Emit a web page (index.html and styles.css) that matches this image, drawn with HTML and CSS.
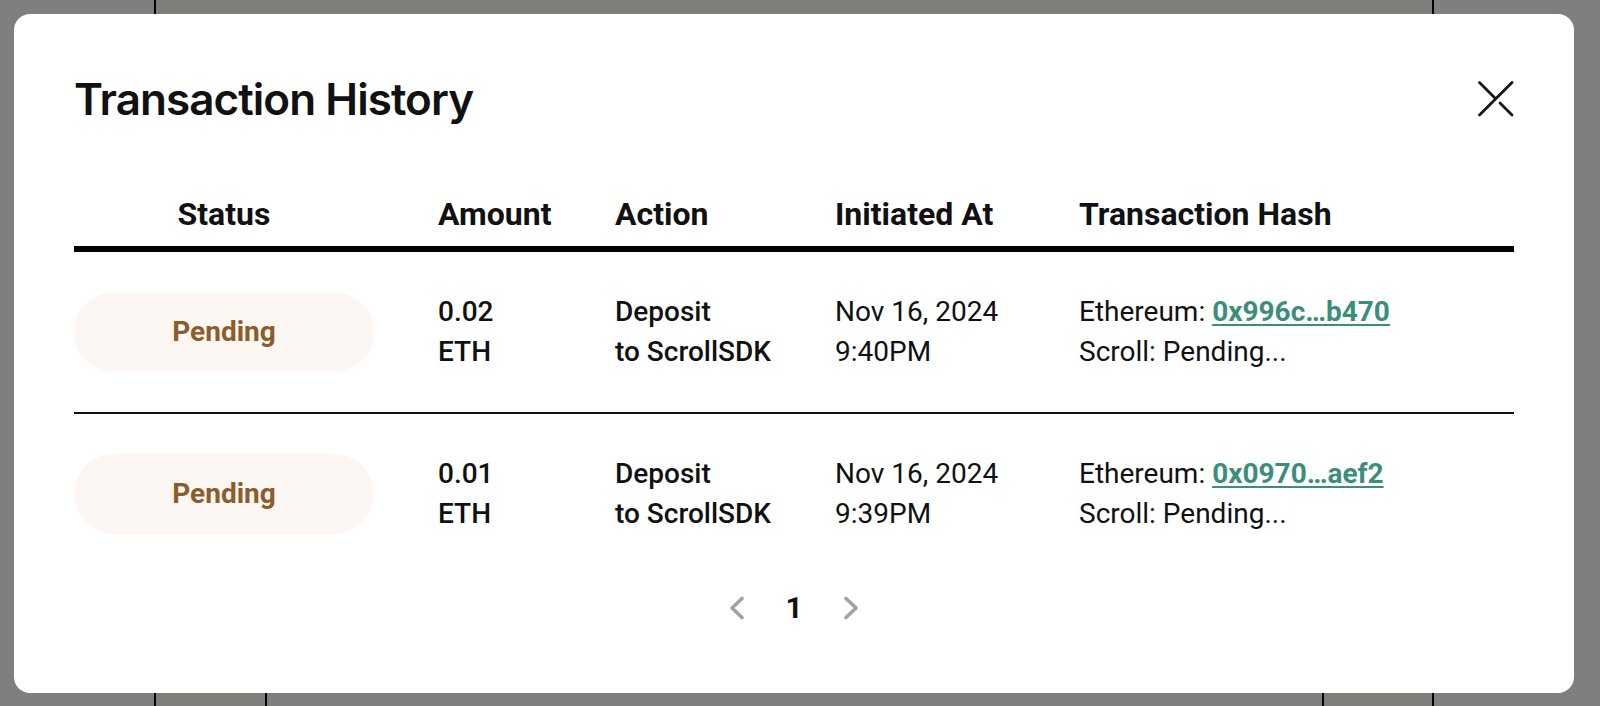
FILE: index.html
```html
<!DOCTYPE html>
<html lang="en">
<head>
<meta charset="utf-8">
<title>Transaction History</title>
<link rel="stylesheet" href="styles.css">
</head>
<body>
<div class="page">
  <div class="page-frame">
    <div class="page-top"></div>
    <div class="page-card"></div>
  </div>
</div>

<div class="overlay">
  <div class="modal" role="dialog" aria-labelledby="modal-title">
    <div class="modal-head">
      <h2 class="modal-title" id="modal-title">Transaction History</h2>
      <button class="close-btn" aria-label="Close">
        <svg width="36" height="36" viewBox="0 0 36 36" fill="none" stroke="#151515" stroke-width="2.8" stroke-linecap="round">
          <line x1="34" y1="1.5" x2="1.5" y2="34"/>
          <line x1="1.5" y1="1.5" x2="17.2" y2="17.2"/>
          <line x1="22" y1="22" x2="34" y2="34"/>
        </svg>
      </button>
    </div>

    <div class="tx-table">
      <div class="tx-row tx-head">
        <div class="cell cell-status"><span class="status-head">Status</span></div>
        <div class="cell">Amount</div>
        <div class="cell">Action</div>
        <div class="cell">Initiated At</div>
        <div class="cell">Transaction Hash</div>
      </div>

      <div class="tx-row tx-item">
        <div class="cell cell-status"><span class="pill">Pending</span></div>
        <div class="cell strong"><div>0.02</div><div>ETH</div></div>
        <div class="cell strong"><div>Deposit</div><div>to ScrollSDK</div></div>
        <div class="cell"><div>Nov 16, 2024</div><div>9:40PM</div></div>
        <div class="cell"><div>Ethereum: <a class="hash" href="#">0x996c…b470</a></div><div>Scroll: Pending...</div></div>
      </div>

      <div class="tx-row tx-item">
        <div class="cell cell-status"><span class="pill">Pending</span></div>
        <div class="cell strong"><div>0.01</div><div>ETH</div></div>
        <div class="cell strong"><div>Deposit</div><div>to ScrollSDK</div></div>
        <div class="cell"><div>Nov 16, 2024</div><div>9:39PM</div></div>
        <div class="cell"><div>Ethereum: <a class="hash" href="#">0x0970…aef2</a></div><div>Scroll: Pending...</div></div>
      </div>
    </div>

    <nav class="pager" aria-label="Pagination">
      <span class="pager-arrow">
        <svg width="16" height="24" viewBox="0 0 16 24" fill="none" stroke="#a2a2a2" stroke-width="3.6" stroke-linecap="round" stroke-linejoin="round"><polyline points="13,2.5 3,12 13,21.5"/></svg>
      </span>
      <span class="pager-num">1</span>
      <span class="pager-arrow">
        <svg width="16" height="24" viewBox="0 0 16 24" fill="none" stroke="#a2a2a2" stroke-width="3.6" stroke-linecap="round" stroke-linejoin="round"><polyline points="3,2.5 13,12 3,21.5"/></svg>
      </span>
    </nav>
  </div>
</div>
</body>
</html>
```

FILE: styles.css
```css
* { box-sizing: border-box; }

html, body {
  margin: 0;
  height: 100%;
}

body {
  background: #ffffff;
  font-family: Roboto, "Noto Sans", Arial, sans-serif;
  color: #111111;
  overflow: hidden;
}

/* page behind the dialog */
.page {
  height: 100%;
  display: flex;
  justify-content: flex-start;
  padding-left: 154px;
}

.page-frame {
  width: 1280px;
  height: 100%;
  border-left: 2px solid #000;
  border-right: 2px solid #000;
  background: #fcfef4;
  display: flex;
  flex-direction: column;
}

.page-top { flex: 1; }

.page-card {
  height: 40px;
  margin: 0 108px 0 109px;
  background: #ffffff;
  border-left: 2px solid #000;
  border-right: 2px solid #000;
}

/* dialog */
.overlay {
  position: fixed;
  inset: 0;
  background: rgba(0, 0, 0, 0.5);
  display: flex;
  padding: 14px 26px 13px 14px;
}

.modal {
  flex: 1;
  background: #ffffff;
  border-radius: 16px;
  padding: 59px 60px 0 60px;
  display: flex;
  flex-direction: column;
}

.modal-head {
  display: flex;
  justify-content: space-between;
  align-items: center;
}

.modal-title {
  margin: 0;
  font-family: Inter, "Liberation Sans", sans-serif;
  font-weight: 600;
  font-size: 44px;
  line-height: 52px;
  letter-spacing: -0.95px;
  color: #111111;
}

.close-btn {
  width: 36px;
  height: 36px;
  padding: 0;
  border: 0;
  background: none;
  display: flex;
  align-items: center;
  justify-content: center;
  cursor: pointer;
}

.tx-table {
  margin-top: 70px;
}

.tx-row {
  display: grid;
  grid-template-columns: 364px 177px 220px 244px 1fr;
}

.tx-head {
  font-size: 32px;
  font-weight: 700;
  line-height: 38px;
  padding-bottom: 13px;
  border-bottom: 6px solid #000;
}

.cell-status {
  width: 300px;
  display: flex;
  justify-content: center;
  align-items: center;
}

.tx-item {
  padding: 40px 0;
  font-size: 28px;
  line-height: 40px;
  font-weight: 400;
}

.tx-item + .tx-item {
  border-top: 2px solid #111;
}

.strong { font-weight: 500; }

.pill {
  width: 300px;
  height: 80px;
  border-radius: 40px;
  background: #fcf7f2;
  color: #8b5d2d;
  font-weight: 700;
  font-size: 28px;
  display: flex;
  align-items: center;
  justify-content: center;
}

.hash {
  color: #3c8e7c;
  font-weight: 700;
  text-decoration: underline;
  text-decoration-thickness: 2px;
  text-underline-offset: 3px;
}

.pager {
  margin-top: 15px;
  display: flex;
  justify-content: center;
  align-items: center;
  gap: 28px;
}

.pager-arrow {
  display: flex;
  align-items: center;
  width: 16px;
  height: 38px;
}

.pager-num {
  font-size: 30px;
  font-weight: 700;
  line-height: 38px;
  padding: 0 12px;
}
```
